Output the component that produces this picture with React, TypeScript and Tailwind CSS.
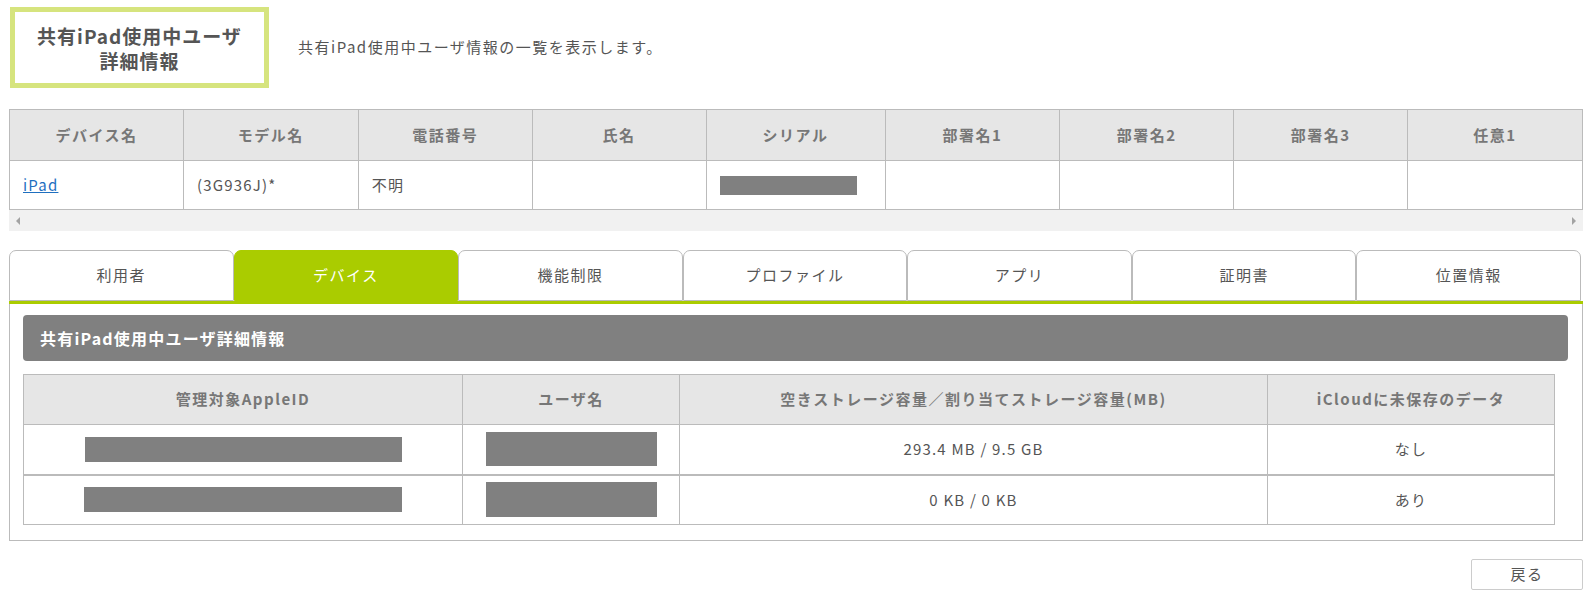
import React from 'react'

const deviceColumns = ['デバイス名', 'モデル名', '電話番号', '氏名', 'シリアル', '部署名1', '部署名2', '部署名3', '任意1']
const deviceWidths = ['w-[174px]', 'w-[175px]', 'w-[174px]', 'w-[174px]', 'w-[179px]', 'w-[175px]', 'w-[174px]', 'w-[174px]', 'w-[175px]']

const tabs = ['利用者', 'デバイス', '機能制限', 'プロファイル', 'アプリ', '証明書', '位置情報']

const Redacted = ({ className }: { className: string }) => <div className={`bg-[#808080] ${className}`} />

const cell = 'border border-[#bbb]'
const head = 'border border-[#bbb] text-center text-[15px] font-bold tracking-[1.5px] text-[#777]'

export default function App() {
  return (
    <div
      className="h-[600px] w-[1593px] overflow-hidden bg-white pl-[9px] text-[15px] tracking-[1.2px] text-[#555]"
      style={{ fontFamily: '"Noto Sans CJK JP", "Noto Sans", "Liberation Sans", sans-serif' }}
    >
      <div className="w-[1574px]">
        {/* page heading */}
        <div className="flex items-center pt-[7px]">
          <div className="ml-[1px] flex h-[81px] w-[259px] flex-col items-center justify-center border-[5px] border-[#d6e47e] text-[19px] font-bold leading-[25px] tracking-[1px] text-[#555]">
            <span>共有iPad使用中ユーザ</span>
            <span>詳細情報</span>
          </div>
          <p className="ml-[29px] text-[15px] tracking-[1.5px] text-[#555]">共有iPad使用中ユーザ情報の一覧を表示します。</p>
        </div>

        {/* device table with scroll */}
        <div className="mt-[21px] overflow-hidden">
          <table className="table-fixed border-collapse">
            <thead>
              <tr className="h-[51px] bg-[#e6e6e6]">
                {deviceColumns.map((c, i) => (
                  <th key={c} className={`${deviceWidths[i]} ${head}`}>
                    {c}
                  </th>
                ))}
              </tr>
            </thead>
            <tbody>
              <tr className="h-[49px]">
                <td className={`${cell} px-[13px]`}>
                  <a href="#" className="text-[#1f6fbf] underline">
                    iPad
                  </a>
                </td>
                <td className={`${cell} px-[13px]`}>(3G936J)*</td>
                <td className={`${cell} px-[13px]`}>不明</td>
                <td className={cell} />
                <td className={`${cell} px-[13px]`}>
                  <Redacted className="h-[19px] w-[137px]" />
                </td>
                <td className={cell} />
                <td className={cell} />
                <td className={cell} />
                <td className={cell} />
              </tr>
            </tbody>
          </table>
          <div className="flex h-[21px] items-center justify-between bg-[#f1f1f1] px-[7px]">
            <span className="h-0 w-0 border-y-[4px] border-r-[4px] border-y-transparent border-r-[#a3a3a3]" />
            <span className="h-0 w-0 border-y-[4px] border-l-[4px] border-y-transparent border-l-[#a3a3a3]" />
          </div>
        </div>

        {/* tabs */}
        <div className="mt-[19px] flex w-[1572px]">
          {tabs.map((t) => {
            const active = t === 'デバイス'
            return (
              <div
                key={t}
                className={`flex h-[51px] flex-1 items-center justify-center rounded-t-[7px] border text-[15px] tracking-[1.5px] ${
                  active ? 'border-[#aacc00] bg-[#aacc00] text-white' : 'border-[#bbb] bg-white text-[#555]'
                }`}
              >
                {t}
              </div>
            )
          })}
        </div>
        <div className="h-[3px] bg-[#aacc00]" />

        {/* panel */}
        <div className="border-x border-b border-[#bbb] pb-[15px] pl-[13px] pr-[14px] pt-[11px]">
          <div className="flex h-[46px] items-center rounded-[4px] bg-[#808080] px-[17px] text-[16px] font-bold tracking-[1.2px] text-white">
            共有iPad使用中ユーザ詳細情報
          </div>
          <table className="mt-[13px] w-[1532px] table-fixed border-collapse">
            <thead>
              <tr className="h-[50px] bg-[#e6e6e6]">
                <th className={`w-[439px] ${head}`}>管理対象AppleID</th>
                <th className={`w-[217px] ${head}`}>ユーザ名</th>
                <th className={`w-[588px] ${head}`}>空きストレージ容量／割り当てストレージ容量(MB)</th>
                <th className={head}>iCloudに未保存のデータ</th>
              </tr>
            </thead>
            <tbody>
              <tr className="h-[50px] border-b-2 border-[#bbb]">
                <td className={cell}>
                  <Redacted className="mx-auto h-[25px] w-[317px]" />
                </td>
                <td className={cell}>
                  <Redacted className="mx-auto h-[34px] w-[171px]" />
                </td>
                <td className={`${cell} text-center`}>293.4 MB / 9.5 GB</td>
                <td className={`${cell} text-center`}>なし</td>
              </tr>
              <tr className="h-[50px]">
                <td className={cell}>
                  <Redacted className="mx-auto h-[25px] w-[318px]" />
                </td>
                <td className={cell}>
                  <Redacted className="mx-auto h-[35px] w-[171px]" />
                </td>
                <td className={`${cell} text-center`}>0 KB / 0 KB</td>
                <td className={`${cell} text-center`}>あり</td>
              </tr>
            </tbody>
          </table>
        </div>

        {/* back button */}
        <div className="mt-[18px] flex justify-end">
          <button
            type="button"
            className="h-[31px] w-[112px] rounded-[2px] border border-[#ccc] bg-white text-[15px] tracking-[1.5px] text-[#555]"
          >
            戻る
          </button>
        </div>
      </div>
    </div>
  )
}
